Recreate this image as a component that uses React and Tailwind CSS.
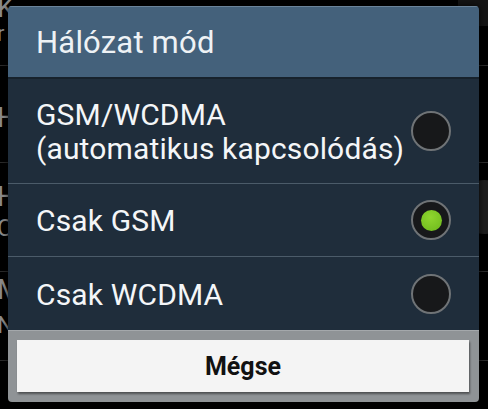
import React, { useState } from 'react';

const options = [
  { id: 'auto', label: ['GSM/WCDMA', '(automatikus kapcsolódás)'] },
  { id: 'gsm', label: ['Csak GSM'] },
  { id: 'wcdma', label: ['Csak WCDMA'] },
];

const Radio = ({ checked }) => (
  <div className="w-[40px] h-[40px] rounded-full bg-[#17181a] border-2 border-[#6f7376] flex items-center justify-center shrink-0">
    {checked && (
      <div className="w-[21px] h-[21px] rounded-full bg-[radial-gradient(circle_at_45%_35%,#8fd62e,#6cb81c)]" />
    )}
  </div>
);

const App = () => {
  const [selected, setSelected] = useState('gsm');

  return (
    <div className="relative w-[488px] h-[409px] bg-black overflow-hidden" style={{ fontFamily: 'Roboto, "Noto Sans", sans-serif' }}>
      {/* Background settings list behind the dialog */}
      <div className="text-[#8a8a8a] text-[28px] leading-none -ml-[3px]">
        <div className="h-[72px] border-b border-[#2a2a2a] pt-[0px]">
          <div className="-mt-[6px]">K</div>
          <div className="text-[22px] mt-[1px]">r</div>
        </div>
        <div className="h-[97px] border-b border-[#2a2a2a] pt-[38px]">H</div>
        <div className="h-[109px] border-b border-[#2a2a2a] pt-[20px]">
          <div>H</div>
          <div className="text-[24px] mt-[5px]">C</div>
        </div>
        <div className="h-[89px] border-b border-[#2a2a2a] pt-[4px]">
          <div>M</div>
          <div className="text-[24px] mt-[9px]">N</div>
        </div>
      </div>
      <div className="absolute right-0 top-0 w-[30px] h-[26px] bg-[#141414]" />
      <div className="absolute right-[-22px] top-[180px] w-[52px] h-[54px] rounded-full bg-[#1c1c1c]" />

      {/* Dialog */}
      <div className="absolute left-[8px] top-[6px] w-[471px] rounded-[4px] overflow-hidden shadow-[0_0_6px_rgba(0,0,0,0.8)]">
        <div className="h-[73px] bg-[#44617b] border-t border-[#6a8399] border-b-2 border-b-[#17222c] flex items-center pl-[28px]">
          <span className="text-[31px] text-[#eef2f5] tracking-[0.2px] mt-[2px]">Hálózat mód</span>
        </div>

        <div className="bg-[#1f2d3b]">
          {options.map((opt, i) => (
            <div
              key={opt.id}
              onClick={() => setSelected(opt.id)}
              className={`flex items-center justify-between pl-[28px] pr-[28px] cursor-pointer ${
                i < options.length - 1 ? 'border-b border-[#4b5b69]' : ''
              } ${opt.label.length > 1 ? 'h-[105px]' : 'h-[73px]'}`}
            >
              <div className="text-[30px] text-[#f4f6f8] leading-[34px] tracking-[0.15px] mt-[2px]">
                {opt.label.map((line) => (
                  <div key={line}>{line}</div>
                ))}
              </div>
              <Radio checked={selected === opt.id} />
            </div>
          ))}
        </div>

        <div className="bg-[#8f9396] h-[72px] pt-[9px] px-[9px] border-t border-[#a4a8ab]">
          <button className="w-[452px] h-[52px] bg-[#f4f4f4] shadow-[1px_2px_2px_rgba(0,0,0,0.45)] flex items-center justify-center text-[25px] font-bold text-[#111] pt-[2px]">
            Mégse
          </button>
        </div>
      </div>
    </div>
  );
};

export default App;
